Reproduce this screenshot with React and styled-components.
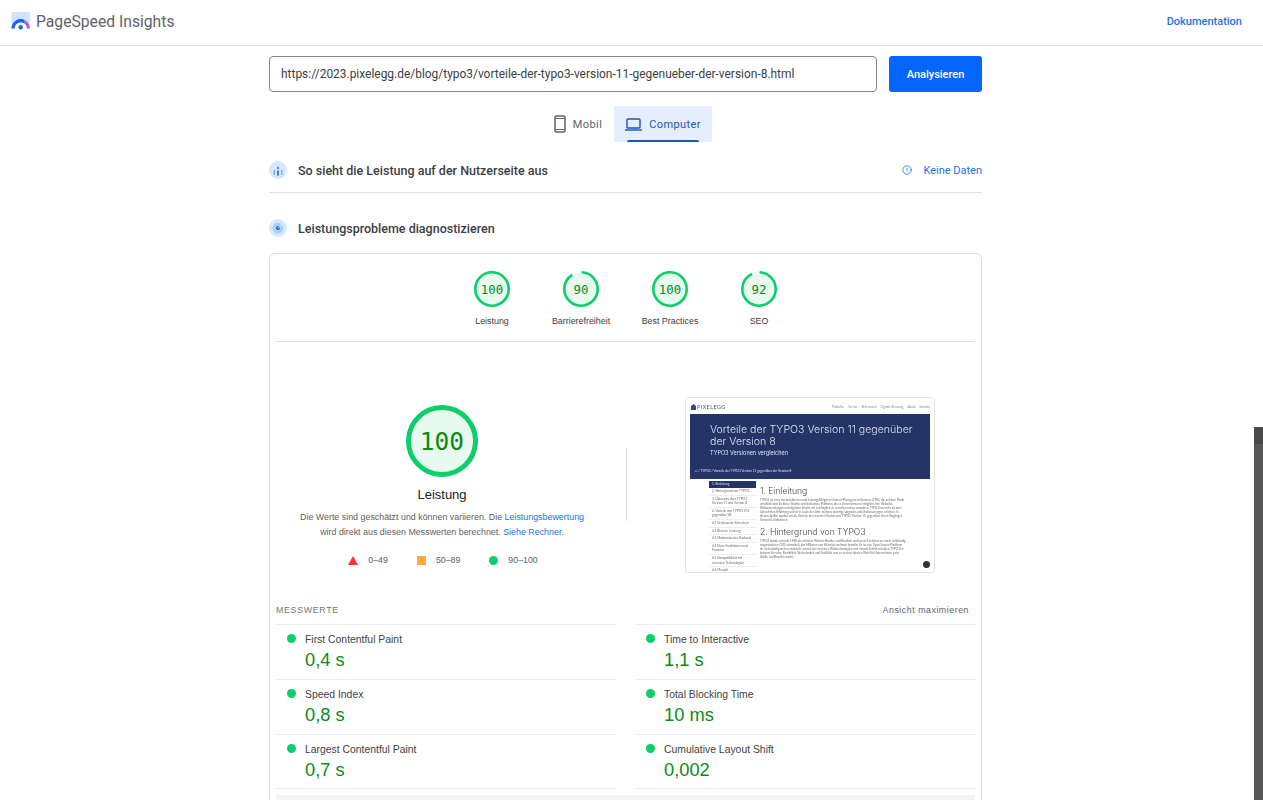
import React from "react";
import styled, { createGlobalStyle } from "styled-components";
import { CircleAlert } from "lucide-react";

const GREEN = "#0cce6b";

const scores = [
  { label: "Leistung", value: 100 },
  { label: "Barrierefreiheit", value: 90 },
  { label: "Best Practices", value: 100 },
  { label: "SEO", value: 92 },
];

const metrics = [
  { label: "First Contentful Paint", value: "0,4 s" },
  { label: "Time to Interactive", value: "1,1 s" },
  { label: "Speed Index", value: "0,8 s" },
  { label: "Total Blocking Time", value: "10 ms" },
  { label: "Largest Contentful Paint", value: "0,7 s" },
  { label: "Cumulative Layout Shift", value: "0,002" },
];

const tocItems = [
  "2. Hintergrund von TYPO3",
  "3. Übersicht über TYPO3 Version 11 und Version 8",
  "4. Vorteile von TYPO3 V11 gegenüber V8",
  "4.1 Verbesserte Sicherheit",
  "4.2 Bessere Leistung",
  "4.3 Modernisiertes Backend",
  "4.4 Neue Funktionen und Features",
  "4.5 Kompatibilität mit neuesten Technologien",
  "4.6 Mensch",
];

const Gauge = ({ size, stroke, value, fontSize }) => {
  const r = (size - stroke) / 2;
  const c = 2 * Math.PI * r;
  return (
    <GaugeWrap $size={size}>
      <svg width={size} height={size} viewBox={`0 0 ${size} ${size}`}>
        <circle cx={size / 2} cy={size / 2} r={r} fill="#e8f9f0" />
        <circle
          cx={size / 2}
          cy={size / 2}
          r={r}
          fill="none"
          stroke={GREEN}
          strokeWidth={stroke}
          strokeDasharray={`${(c * value) / 100} ${c}`}
          transform={`rotate(-88 ${size / 2} ${size / 2})`}
        />
      </svg>
      <GaugeValue $fontSize={fontSize}>{value}</GaugeValue>
    </GaugeWrap>
  );
};

const Logo = () => (
  <svg width="20" height="18" viewBox="0 0 20 18">
    <rect x="0.5" y="0" width="18.5" height="11" rx="1.5" fill="#cfe3fd" />
    <circle cx="2.5" cy="2" r="0.6" fill="#fff" />
    <circle cx="4.5" cy="2" r="0.6" fill="#fff" />
    <path d="M2 16.5 A7.7 7.7 0 0 1 13.5 9.8" fill="none" stroke="#1164f2" strokeWidth="3.2" />
    <path d="M13.5 9.8 A7.7 7.7 0 0 1 17.4 16.5" fill="none" stroke="#b05ee8" strokeWidth="3.2" />
    <circle cx="9.7" cy="15.2" r="2.2" fill="#1164f2" />
  </svg>
);

const PhoneIcon = () => (
  <svg width="12" height="18" viewBox="0 0 12 18">
    <rect x="1" y="1" width="10" height="16" rx="1.5" fill="none" stroke="#5f6368" strokeWidth="1.5" />
    <path d="M1 3.5h10M1 14.5h10" stroke="#5f6368" strokeWidth="1.2" />
  </svg>
);

const LaptopIcon = () => (
  <svg width="17" height="13" viewBox="0 0 17 13">
    <rect x="2" y="1" width="13" height="9" rx="1" fill="none" stroke="#1a56b8" strokeWidth="1.4" />
    <path d="M0 12h17" stroke="#1a56b8" strokeWidth="1.4" />
  </svg>
);

const FieldIcon = () => (
  <svg width="18" height="18" viewBox="0 0 18 18">
    <circle cx="9" cy="9" r="9" fill="#d6e8fd" />
    <circle cx="9" cy="7" r="1.2" fill="#4a90e8" />
    <rect x="4.5" y="9" width="1.6" height="5" fill="#7db4f2" />
    <rect x="8" y="9.5" width="2" height="5" fill="#3b82e6" />
    <rect x="11.9" y="9" width="1.6" height="5" fill="#7db4f2" />
  </svg>
);

const LabIcon = () => (
  <svg width="18" height="18" viewBox="0 0 18 18">
    <circle cx="9" cy="9" r="9" fill="#d6e8fd" />
    <circle cx="9" cy="9" r="5.5" fill="#a9cffa" />
    <circle cx="9" cy="9" r="2" fill="#1a6cf0" />
    <path d="M9 9 L14 5" stroke="#fff" strokeWidth="0.8" />
  </svg>
);

const App = () => (
  <>
    <GlobalStyle />
    <Page>
      <Header>
        <Brand>
          <Logo />
          <BrandName>PageSpeed Insights</BrandName>
        </Brand>
        <DocLink>Dokumentation</DocLink>
      </Header>

      <Column>
        <SearchForm>
          <UrlField>https://2023.pixelegg.de/blog/typo3/vorteile-der-typo3-version-11-gegenueber-der-version-8.html</UrlField>
          <AnalyzeButton>Analysieren</AnalyzeButton>
        </SearchForm>

        <Tabs>
          <Tab>
            <PhoneIcon />
            Mobil
          </Tab>
          <Tab $active>
            <LaptopIcon />
            Computer
          </Tab>
        </Tabs>

        <SectionRow $divider>
          <SectionTitle>
            <FieldIcon />
            So sieht die Leistung auf der Nutzerseite aus
          </SectionTitle>
          <NoData>
            <CircleAlert size={10} strokeWidth={2} />
            Keine Daten
          </NoData>
        </SectionRow>

        <SectionRow $second>
          <SectionTitle>
            <LabIcon />
            Leistungsprobleme diagnostizieren
          </SectionTitle>
        </SectionRow>

        <Card>
          <ScoreBar>
            {scores.map((s) => (
              <Score key={s.label}>
                <Gauge size={36} stroke={2.6} value={s.value} fontSize={12.4} />
                <ScoreLabel>{s.label}</ScoreLabel>
              </Score>
            ))}
          </ScoreBar>

          <Hero>
            <HeroLeft>
              <Gauge size={72} stroke={5} value={100} fontSize={24.5} />
              <HeroTitle>Leistung</HeroTitle>
              <HeroText>
                Die Werte sind geschätzt und können variieren. Die <TextLink>Leistungsbewertung</TextLink>
                <br />
                wird direkt aus diesen Messwerten berechnet. <TextLink>Siehe Rechner.</TextLink>
              </HeroText>
              <Legend>
                <LegendItem>
                  <svg width="10" height="9" viewBox="0 0 10 9">
                    <path d="M5 0 L10 9 H0 Z" fill="#ff3333" />
                  </svg>
                  0–49
                </LegendItem>
                <LegendItem>
                  <LegendSquare />
                  50–89
                </LegendItem>
                <LegendItem>
                  <Dot />
                  90–100
                </LegendItem>
              </Legend>
            </HeroLeft>

            <HeroDivider />

            <HeroRight>
              <Thumb>
                <ThumbNav>
                  <ThumbBrand>
                    <svg width="5" height="6" viewBox="0 0 5 6">
                      <path d="M2.5 0 L5 2 V6 H0 V2 Z" fill="#3c4a70" />
                    </svg>
                    PIXELEGG
                  </ThumbBrand>
                  <ThumbLinks>
                    <span>Produkte</span>
                    <span>Service</span>
                    <span>Referenzen</span>
                    <span>Digitale Beratung</span>
                    <span>About</span>
                    <span>Kontakt</span>
                  </ThumbLinks>
                </ThumbNav>
                <ThumbBanner>
                  <ThumbTitle>Vorteile der TYPO3 Version 11 gegenüber der Version 8</ThumbTitle>
                  <ThumbSub>TYPO3 Versionen vergleichen</ThumbSub>
                  <ThumbCrumb>⌂ / TYPO3 / Vorteile der TYPO3 Version 11 gegenüber der Version 8</ThumbCrumb>
                </ThumbBanner>
                <ThumbBody>
                  <ThumbToc>
                    <TocActive>1. Einleitung</TocActive>
                    {tocItems.map((t) => (
                      <TocItem key={t}>{t}</TocItem>
                    ))}
                  </ThumbToc>
                  <ThumbMain>
                    <ThumbHeading>1. Einleitung</ThumbHeading>
                    <ThumbPara>
                      TYPO3 ist eines der beliebtesten und leistungsfähigsten Content-Management-Systeme (CMS), die auf dem
                      Markt erhältlich sind. Es bietet flexible und skalierbare Plattform, die es Unternehmen ermöglicht, ihre
                      Websites, Webanwendungen und digitalen Inhalte mit Leichtigkeit zu erstellen und zu verwalten. TYPO3 hat
                      mehr als zwei Jahrzehnten Erfahrung und ist in Laufe der Jahre mehrere wichtige Upgrades und
                      Verbesserungen erfahren. In diesem Artikel werden wir die Vorteile der neuesten Version von TYPO3, Version 11,
                      gegenüber ihrem Vorgänger, Version 8, diskutieren.
                    </ThumbPara>
                    <ThumbHeading>2. Hintergrund von TYPO3</ThumbHeading>
                    <ThumbPara>
                      TYPO3 wurde erstmals 1998 als einfacher Website-Builder veröffentlicht und hat sich seitdem zu einem
                      vollständig ausgestatteten CMS entwickelt, das Millionen von Websites weltweit betreibt. Es ist eine Open
                      Source-Plattform, die sich ständig weiterentwickelt, um mit den neuesten Webtechnologien und -trends Schritt
                      zu halten. TYPO3 ist bekannt für seine Flexibilität, Skalierbarkeit und Stabilität, was es zu einer idealen
                      Wahl für Unternehmen jeder Größe und Branche macht.
                    </ThumbPara>
                  </ThumbMain>
                </ThumbBody>
                <ThumbBadge />
              </Thumb>
            </HeroRight>
          </Hero>

          <MetricsHead>
            <MetricsTitle>MESSWERTE</MetricsTitle>
            <MetricsToggle>Ansicht maximieren</MetricsToggle>
          </MetricsHead>

          <MetricsGrid>
            {metrics.map((m) => (
              <Metric key={m.label}>
                <Dot />
                <div>
                  <MetricLabel>{m.label}</MetricLabel>
                  <MetricValue>{m.value}</MetricValue>
                </div>
              </Metric>
            ))}
          </MetricsGrid>
          <GreyBar />
        </Card>
      </Column>

      <Scrollbar>
        <ScrollThumb />
      </Scrollbar>
    </Page>
  </>
);

const GlobalStyle = createGlobalStyle`
  html, body {
    margin: 0;
    padding: 0;
    background: #fff;
    font-family: "Liberation Sans", Arial, sans-serif;
  }
`;

const Page = styled.div`
  position: relative;
  height: 800px;
  overflow: hidden;
  background: #fff;
`;

const Header = styled.header`
  display: flex;
  align-items: center;
  justify-content: space-between;
  height: 42px;
  padding: 0 21px 3px 11px;
  border-bottom: 1px solid #e0e0e0;
`;

const Brand = styled.div`
  display: flex;
  align-items: center;
  gap: 5px;
`;

const BrandName = styled.span`
  font-family: Roboto, sans-serif;
  font-size: 15.7px;
  color: #5f6368;
`;

const DocLink = styled.a`
  font-family: Roboto, sans-serif;
  font-size: 11px;
  font-weight: 500;
  color: #1a73e8;
`;

const Column = styled.main`
  width: 713px;
  margin: 10px 0 0 269px;
`;

const SearchForm = styled.div`
  display: flex;
  gap: 12px;
`;

const UrlField = styled.div`
  flex: 1;
  height: 36px;
  box-sizing: border-box;
  display: flex;
  align-items: center;
  padding: 0 11px;
  border: 1px solid #80868b;
  border-radius: 4px;
  font-family: Roboto, sans-serif;
  font-size: 11.95px;
  color: #3c4043;
  white-space: nowrap;
  overflow: hidden;
`;

const AnalyzeButton = styled.button`
  width: 93px;
  height: 36px;
  border: 0;
  border-radius: 3px;
  background: #0565ff;
  color: #fff;
  font-family: Roboto, sans-serif;
  font-size: 11px;
  font-weight: 500;
`;

const Tabs = styled.div`
  display: flex;
  justify-content: center;
  margin: 14px 0 0;
  padding-left: 3px;
`;

const Tab = styled.div`
  position: relative;
  display: flex;
  align-items: center;
  justify-content: center;
  gap: 7px;
  height: 36px;
  width: ${(p) => (p.$active ? "98px" : "72px")};
  background: ${(p) => (p.$active ? "#e4eefc" : "transparent")};
  color: ${(p) => (p.$active ? "#1a56b8" : "#5f6368")};
  font-family: Roboto, sans-serif;
  font-size: 11px;
  letter-spacing: 0.4px;

  ${(p) =>
    p.$active &&
    `&::after {
      content: "";
      position: absolute;
      left: 13px;
      right: 13px;
      bottom: 0;
      height: 2px;
      border-radius: 2px 2px 0 0;
      background: #1a56b8;
    }`}
`;

const SectionRow = styled.div`
  display: flex;
  align-items: center;
  justify-content: space-between;
  height: ${(p) => (p.$second ? "36px" : "44px")};
  margin-top: ${(p) => (p.$second ? "17px" : "6px")};
  border-bottom: ${(p) => (p.$divider ? "1px solid #e0e0e0" : "0")};
`;

const SectionTitle = styled.div`
  display: flex;
  align-items: center;
  gap: 11px;
  font-family: Roboto, sans-serif;
  font-size: 12.5px;
  font-weight: 500;
  color: #3c4043;
`;

const NoData = styled.div`
  display: flex;
  align-items: center;
  gap: 11px;
  font-family: Roboto, sans-serif;
  font-size: 11px;
  color: #1a73e8;
`;

const Card = styled.section`
  margin-top: 7px;
  height: 600px;
  box-sizing: border-box;
  padding: 0 6px;
  border: 1px solid #dadce0;
  border-radius: 6px;
`;

const ScoreBar = styled.div`
  display: flex;
  justify-content: center;
  box-sizing: border-box;
  height: 88px;
  padding-top: 17px;
  border-bottom: 1px solid #e0e0e0;
`;

const Score = styled.div`
  display: flex;
  flex-direction: column;
  align-items: center;
  width: 89px;
`;

const ScoreLabel = styled.div`
  margin-top: 9px;
  font-size: 8.9px;
  line-height: 11px;
  color: #3c4043;
`;

const GaugeWrap = styled.div`
  display: grid;
  width: ${(p) => p.$size}px;
  height: ${(p) => p.$size}px;
  flex: none;

  & > * {
    grid-area: 1 / 1;
  }
`;

const GaugeValue = styled.div`
  display: flex;
  align-items: center;
  justify-content: center;
  font-family: "DejaVu Sans Mono", monospace;
  font-size: ${(p) => p.$fontSize}px;
  color: #0a8a10;
`;

const Hero = styled.div`
  display: grid;
  grid-template-columns: 332px 1px 1fr;
  column-gap: 18px;
  height: 257px;
`;

const HeroLeft = styled.div`
  display: flex;
  flex-direction: column;
  align-items: center;
  padding-top: 63px;
`;

const HeroTitle = styled.div`
  margin-top: 10px;
  font-size: 13px;
  line-height: 15px;
  color: #212121;
`;

const HeroText = styled.p`
  margin: 8px 0 0;
  width: 332px;
  text-align: center;
  font-size: 8.9px;
  line-height: 15px;
  color: #616161;
  white-space: nowrap;
`;

const TextLink = styled.a`
  color: #1a73e8;
`;

const Legend = styled.div`
  display: flex;
  gap: 29px;
  margin-top: 15px;
  margin-left: 2px;
`;

const LegendItem = styled.div`
  display: flex;
  align-items: center;
  gap: 10px;
  font-size: 8.8px;
  color: #616161;
`;

const LegendSquare = styled.span`
  width: 9px;
  height: 9px;
  background: #ffa93a;
`;

const Dot = styled.span`
  display: block;
  flex: none;
  width: 9px;
  height: 9px;
  border-radius: 50%;
  background: ${GREEN};
`;

const HeroDivider = styled.div`
  margin-top: 106px;
  height: 73px;
  background: #e0e0e0;
`;

const HeroRight = styled.div`
  padding: 55px 0 0 40px;
`;

const Thumb = styled.div`
  position: relative;
  width: 250px;
  height: 176px;
  box-sizing: border-box;
  padding: 1px 4px 0;
  border: 1px solid #e4e4e4;
  border-radius: 3px;
  overflow: hidden;
  background: #fff;
  font-family: Lato, sans-serif;
  filter: blur(0.35px);
`;

const ThumbNav = styled.div`
  display: flex;
  align-items: center;
  justify-content: space-between;
  height: 15px;
`;

const ThumbBrand = styled.div`
  display: flex;
  align-items: center;
  gap: 1px;
  font-size: 5.5px;
  letter-spacing: 0.4px;
  color: #555;
  padding-left: 1px;
`;

const ThumbLinks = styled.div`
  display: flex;
  gap: 4px;
  font-size: 3px;
  color: #888;
`;

const ThumbBanner = styled.div`
  height: 65px;
  box-sizing: border-box;
  padding: 10px 10px 0 20px;
  background: #243466;
  color: #dfe3ee;
`;

const ThumbTitle = styled.div`
  font-family: Inter, sans-serif;
  font-weight: 300;
  font-size: 10.6px;
  line-height: 12px;
`;

const ThumbSub = styled.div`
  margin-top: 2px;
  font-family: Inter, sans-serif;
  font-size: 5.5px;
  line-height: 7px;
`;

const ThumbCrumb = styled.div`
  margin: 12px 0 0 -15px;
  font-size: 3.2px;
  white-space: nowrap;
`;

const ThumbBody = styled.div`
  display: flex;
  gap: 4px;
  margin-top: 2px;
  padding-left: 19px;
`;

const ThumbToc = styled.div`
  flex: none;
  width: 47px;
  font-size: 3.2px;
  line-height: 4.6px;
  color: #666;
`;

const TocActive = styled.div`
  height: 7px;
  padding-left: 3px;
  line-height: 7px;
  background: #243466;
  color: #dfe3ee;
`;

const TocItem = styled.div`
  padding: 1px 3px;
  border-bottom: 0.3px solid #eee;
`;

const ThumbMain = styled.div`
  width: 146px;
  padding-top: 5px;
`;

const ThumbHeading = styled.div`
  font-family: Inter, sans-serif;
  font-weight: 300;
  font-size: 8.6px;
  line-height: 11px;
  color: #444;
  white-space: nowrap;
`;

const ThumbPara = styled.p`
  margin: 1px 0 5px;
  font-size: 2.9px;
  line-height: 4px;
  color: #666;
`;

const ThumbBadge = styled.span`
  position: absolute;
  right: 4px;
  bottom: 4px;
  width: 7px;
  height: 7px;
  border-radius: 50%;
  background: #333;
`;

const MetricsHead = styled.div`
  display: flex;
  align-items: center;
  justify-content: space-between;
  height: 22px;
  padding: 0 6px 3px 0;
`;

const MetricsTitle = styled.div`
  font-size: 8.8px;
  letter-spacing: 0.7px;
  color: #757575;
`;

const MetricsToggle = styled.div`
  font-size: 8.9px;
  letter-spacing: 0.5px;
  color: #616161;
`;

const MetricsGrid = styled.div`
  display: grid;
  grid-template-columns: 341px 341px;
  column-gap: 18px;
`;

const Metric = styled.div`
  display: flex;
  gap: 9px;
  height: 55px;
  box-sizing: border-box;
  padding: 9px 0 0 11px;
  border-top: 1px solid #ececec;

  &:nth-child(n + 5) {
    border-bottom: 1px solid #ececec;
  }
`;

const MetricLabel = styled.div`
  font-size: 10.4px;
  line-height: 12px;
  color: #424242;
`;

const MetricValue = styled.div`
  margin-top: 3px;
  font-size: 18.3px;
  line-height: 21px;
  color: #0c8a1a;
`;

const GreyBar = styled.div`
  margin-top: 6px;
  height: 20px;
  background: #f3f3f3;
`;

const Scrollbar = styled.div`
  position: absolute;
  top: 427px;
  right: 0;
  bottom: 0;
  width: 9px;
  background: #565656;
`;

const ScrollThumb = styled.div`
  height: 17px;
  background: #484848;
`;

export default App;
